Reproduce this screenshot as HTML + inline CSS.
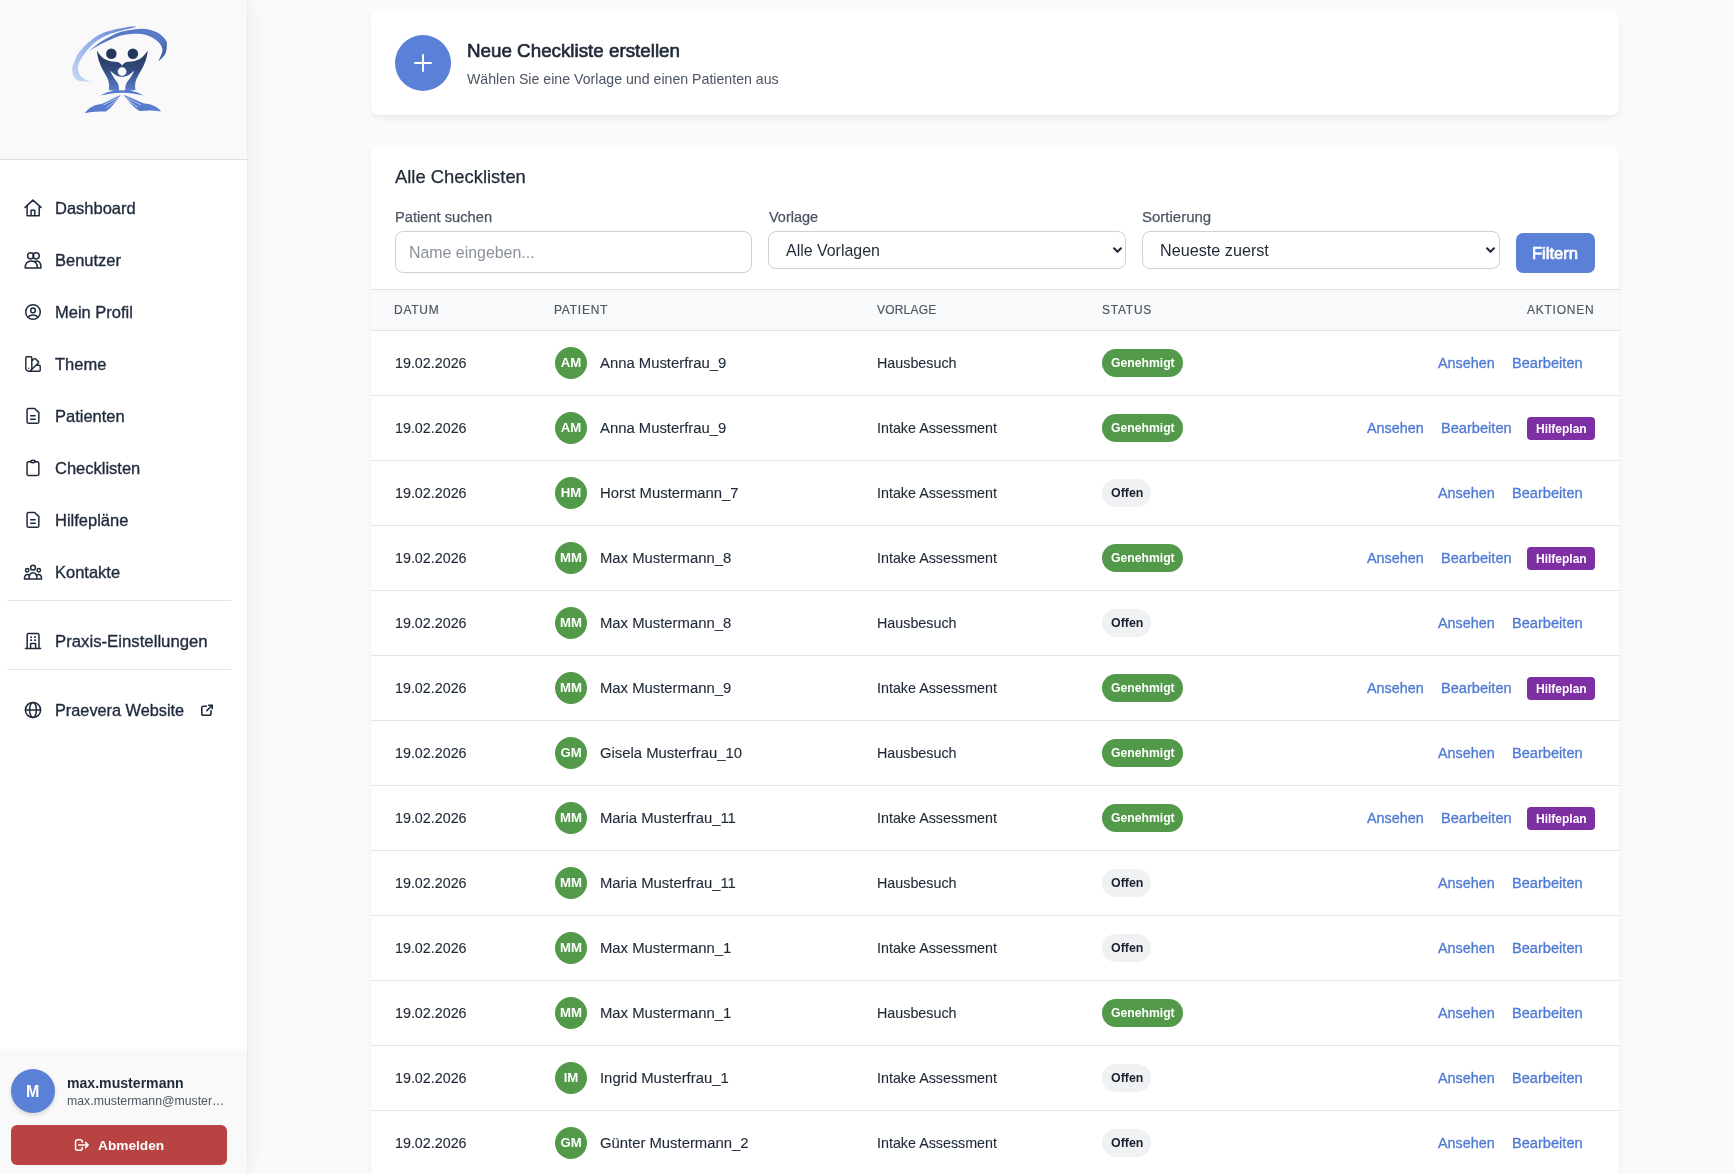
<!DOCTYPE html><html><head><meta charset="utf-8"><style>*{box-sizing:border-box;margin:0;padding:0}
html,body{width:1735px;height:1174px;overflow:hidden}
body{font-family:"Liberation Sans",sans-serif;background:#fafafa;color:#1f2937;position:relative}
.t{position:absolute;white-space:nowrap;will-change:transform}
.ic{position:absolute;width:20px;height:20px;overflow:visible}
.sb{position:absolute;left:0;top:0;width:247px;height:1174px;background:#fff;box-shadow:1px 0 2px rgba(0,0,0,0.04),4px 0 18px rgba(0,0,0,0.05)}
.sb-top{position:absolute;left:0;top:0;width:247px;height:160px;background:#f9f9fa;border-bottom:1px solid #dcdde4}
.sb-bot{position:absolute;left:0;top:1049px;width:247px;height:125px;background:#f9f9fa}
.sep{position:absolute;left:7px;width:224px;height:1px;background:#e2e3ea}
.uav{position:absolute;left:11px;top:1069px;width:44px;height:44px;border-radius:50%;background:#5b80d7;box-shadow:0 2px 4px rgba(0,0,0,0.15)}
.logout{position:absolute;left:11px;top:1125px;width:216px;height:40px;border-radius:6px;background:#b94242}
.card{position:absolute;left:371px;width:1248px;background:#fff;border-radius:8px;box-shadow:0 4px 7px -1px rgba(0,0,0,0.06),0 2px 4px -2px rgba(0,0,0,0.05),0 0 2px rgba(0,0,0,0.025)}
.plus{position:absolute;left:395px;top:35px;width:56px;height:56px;border-radius:50%;background:#5b80d7}
.plush{position:absolute;left:413.6px;top:62px;width:18.6px;height:2px;background:#fff;border-radius:1px}
.plusv{position:absolute;left:422px;top:53.9px;width:2px;height:18px;background:#fff;border-radius:1px}
.box{position:absolute;border:1px solid #cdd0d8;border-radius:8px;background:#fff}
.btn{position:absolute;left:1516px;top:233px;width:79px;height:40px;border-radius:7px;background:#5b80d7}
.thead{position:absolute;left:371px;top:289px;width:1248px;height:42px;background:#f9fafb;border-top:1px solid #e0e2e8;border-bottom:1px solid #e0e2e8}
.rowline{position:absolute;left:371px;width:1248px;height:1px;background:#e3e4ea}
.av{position:absolute;left:555px;width:32px;height:32px;border-radius:50%;background:#529a4a}
.avt{will-change:transform;position:absolute;left:555px;width:32px;height:32px;line-height:32px;text-align:center;color:#fff;font-weight:bold;font-size:13.2px}
.badge{position:absolute;left:1102px;height:28px;border-radius:14px}
.g{background:#529a4a}
.o{background:#f0f1f3}
.hp{position:absolute;left:1527px;width:68px;height:22.5px;border-radius:4px;background:#7e2fa3}
</style></head><body>
<div class="sb"><div class="sb-top"></div><div class="sb-bot"></div></div>
<svg style="position:absolute;left:60px;top:15px;width:120px;height:110px" viewBox="0 0 1281 1174">
<defs>
<linearGradient id="gs1" x1="0" y1="1" x2="1" y2="0"><stop offset="0" stop-color="#c9d9f4"/><stop offset="0.55" stop-color="#8eaae6"/><stop offset="1" stop-color="#5a7fd2"/></linearGradient>
<linearGradient id="gs2" x1="0" y1="0" x2="1" y2="1"><stop offset="0" stop-color="#4f74c8"/><stop offset="0.6" stop-color="#5a7cc8"/><stop offset="1" stop-color="#34508e"/></linearGradient>
<linearGradient id="gf" x1="0" y1="0" x2="0" y2="1"><stop offset="0" stop-color="#25365c"/><stop offset="0.45" stop-color="#33497a"/><stop offset="1" stop-color="#5b80d0"/></linearGradient>
</defs>
<path fill="url(#gs1)" d="M355,718 C355,718 280,713 250,708 C220,703 196,701 178,690 C160,679 149,662 141,642 C133,622 129,593 130,572 C131,551 132,548 146,517 C160,486 176,431 213,385 C250,339 316,278 367,242 C418,206 458,190 521,171 C584,152 698,132 747,125 C796,118 818,128 818,128 C818,128 796,131 747,144 C698,157 584,182 521,208 C458,234 412,260 367,297 C322,334 281,390 253,427 C225,464 210,493 200,517 C190,541 190,552 192,572 C194,592 199,620 212,640 C225,660 248,677 272,690 C296,703 355,718 355,718 Z"/>
<path fill="url(#gs2)" d="M303,390 C303,390 382,322 429,291 C476,260 539,225 583,205 C627,185 651,179 694,170 C737,161 797,152 839,149 C881,146 912,146 948,154 C984,162 1028,179 1058,198 C1088,217 1116,249 1130,270 C1144,291 1142,301 1141,325 C1140,349 1138,388 1123,416 C1108,444 1050,496 1050,496 C1050,496 1084,424 1090,398 C1096,372 1096,363 1087,343 C1078,323 1062,298 1039,278 C1016,258 981,236 948,223 C915,210 881,203 839,201 C797,199 737,203 694,210 C651,217 627,224 583,242 C539,260 476,291 429,316 C382,341 303,390 303,390 Z"/>
<circle cx="548" cy="413" r="56" fill="#24365c"/>
<circle cx="778" cy="413" r="56" fill="#24365c"/>
<path fill="url(#gf)" d="M395,380 C440,465 500,495 590,500 C650,505 680,540 663,600 C646,540 676,505 736,500 C826,495 886,465 936,380 C930,480 885,565 835,645 C805,695 795,745 805,800 C760,808 700,815 663,818 C626,815 566,808 521,800 C531,745 521,695 491,645 C441,565 400,480 395,380 Z"/>
<circle cx="663" cy="603" r="46" fill="#f9f9fa"/>
<path fill="#f9f9fa" d="M538,596 C580,640 620,662 650,660 L676,660 C706,662 746,640 790,596 C768,660 725,700 708,730 C696,760 694,790 699,822 L627,822 C632,790 630,760 618,730 C601,700 558,660 538,596 Z"/>
<path fill="#5479cc" d="M430,860 C520,810 600,800 663,805 C726,800 806,810 895,860 C806,840 726,828 663,830 C600,828 520,840 430,860 Z"/>
<path fill="#577ccf" d="M265,1050 C300,990 360,960 440,950 C500,930 580,880 650,850 C600,920 540,1000 490,1030 C420,1030 330,1030 265,1050 Z"/>
<path fill="#577ccf" d="M1080,1030 C1040,980 980,950 900,945 C840,920 760,880 680,850 C730,920 790,990 850,1025 C920,1020 1000,1015 1080,1030 Z"/>
<path fill="none" stroke="#e6ecf8" stroke-width="7" stroke-linecap="round" d="M455,930 L625,858 M470,958 L632,878 M500,985 L612,905 M875,930 L705,858 M860,958 L698,878 M830,985 L718,905"/>
</svg>
<div class="t" style="left:55px;top:200.03px;font-size:16.5px;line-height:16.5px;color:#1f2a3c;-webkit-text-stroke:0.35px #1f2a3c;">Dashboard</div>
<svg class="ic" style="left:23px;top:198px" viewBox="0 0 20 20" fill="none" stroke="#1f2a3c" stroke-width="1.5" stroke-linecap="round" stroke-linejoin="round"><path d="M2.1 9.4 L9.9 2.1 L18 9.4 M4.1 7.6 V17.8 H16.2 V7.6 M8.1 17.8 V12.2 H11.8 V17.8"/></svg>
<div class="t" style="left:55px;top:252.03px;font-size:16.5px;line-height:16.5px;color:#1f2a3c;-webkit-text-stroke:0.35px #1f2a3c;">Benutzer</div>
<svg class="ic" style="left:23px;top:250px" viewBox="0 0 20 20" fill="none" stroke="#1f2a3c" stroke-width="1.5" stroke-linecap="round" stroke-linejoin="round"><circle cx="7.7" cy="5.8" r="3.1"/><circle cx="13.1" cy="5.8" r="3.1"/><path d="M2.2 18 C2.2 13.5 4.5 11 8.3 11 C12 11 14.4 13.5 14.4 18 Z M11.5 11.6 C12.2 11.2 13 11 13.8 11 C16.5 11 18 13.8 18 18 H14.4"/></svg>
<div class="t" style="left:55px;top:304.03px;font-size:16.5px;line-height:16.5px;color:#1f2a3c;-webkit-text-stroke:0.35px #1f2a3c;">Mein Profil</div>
<svg class="ic" style="left:23px;top:302px" viewBox="0 0 20 20" fill="none" stroke="#1f2a3c" stroke-width="1.5" stroke-linecap="round" stroke-linejoin="round"><circle cx="10" cy="10" r="7.3"/><circle cx="10" cy="8.4" r="2.3"/><path d="M5.2 15.2 C6.5 13.6 8 13.1 10 13.1 C12 13.1 13.5 13.6 14.8 15.2"/></svg>
<div class="t" style="left:55px;top:356.03px;font-size:16.5px;line-height:16.5px;color:#1f2a3c;-webkit-text-stroke:0.35px #1f2a3c;">Theme</div>
<svg class="ic" style="left:23px;top:354px" viewBox="-0.5 -0.5 25 25" fill="none" stroke="#1f2a3c" stroke-width="1.8" stroke-linecap="round" stroke-linejoin="round"><path d="M4.098 19.902a3.75 3.75 0 0 0 5.304 0l6.401-6.402M6.75 21A3.75 3.75 0 0 1 3 17.25V4.125C3 3.504 3.504 3 4.125 3h5.25c.621 0 1.125.504 1.125 1.125v4.072M6.75 21a3.75 3.75 0 0 0 3.75-3.75V8.197M6.75 21h13.125c.621 0 1.125-.504 1.125-1.125v-5.25c0-.621-.504-1.125-1.125-1.125h-4.072M10.5 8.197l2.88-2.88c.438-.439 1.15-.439 1.59 0l3.712 3.713c.44.44.44 1.152 0 1.59l-2.879 2.88M6.75 17.25h.008v.008H6.75v-.008Z"/></svg>
<div class="t" style="left:55px;top:408.03px;font-size:16.5px;line-height:16.5px;color:#1f2a3c;-webkit-text-stroke:0.35px #1f2a3c;">Patienten</div>
<svg class="ic" style="left:23px;top:406px" viewBox="0 0 20 20" fill="none" stroke="#1f2a3c" stroke-width="1.5" stroke-linecap="round" stroke-linejoin="round"><path d="M5.65 2.45 H11.7 L15.85 6.6 V15.65 A1.6 1.6 0 0 1 14.25 17.25 H5.65 A1.6 1.6 0 0 1 4.05 15.65 V4.05 A1.6 1.6 0 0 1 5.65 2.45 Z M7.6 9.8 H12.2 M7.6 13.2 H12.2"/></svg>
<div class="t" style="left:55px;top:460.03px;font-size:16.5px;line-height:16.5px;color:#1f2a3c;-webkit-text-stroke:0.35px #1f2a3c;">Checklisten</div>
<svg class="ic" style="left:23px;top:458px" viewBox="0 0 20 20" fill="none" stroke="#1f2a3c" stroke-width="1.5" stroke-linecap="round" stroke-linejoin="round"><path d="M7.8 3.8 H5.65 A1.6 1.6 0 0 0 4.05 5.4 V15.95 A1.6 1.6 0 0 0 5.65 17.55 H14.25 A1.6 1.6 0 0 0 15.85 15.95 V5.4 A1.6 1.6 0 0 0 14.25 3.8 H12.2"/><ellipse cx="10" cy="3.5" rx="2.2" ry="1.2"/></svg>
<div class="t" style="left:55px;top:512.03px;font-size:16.5px;line-height:16.5px;color:#1f2a3c;-webkit-text-stroke:0.35px #1f2a3c;">Hilfepläne</div>
<svg class="ic" style="left:23px;top:510px" viewBox="0 0 20 20" fill="none" stroke="#1f2a3c" stroke-width="1.5" stroke-linecap="round" stroke-linejoin="round"><path d="M5.65 2.45 H11.7 L15.85 6.6 V15.65 A1.6 1.6 0 0 1 14.25 17.25 H5.65 A1.6 1.6 0 0 1 4.05 15.65 V4.05 A1.6 1.6 0 0 1 5.65 2.45 Z M7.6 9.8 H12.2 M7.6 13.2 H12.2"/></svg>
<div class="t" style="left:55px;top:564.03px;font-size:16.5px;line-height:16.5px;color:#1f2a3c;-webkit-text-stroke:0.35px #1f2a3c;">Kontakte</div>
<svg class="ic" style="left:23px;top:562px" viewBox="0 0 20 20" fill="none" stroke="#1f2a3c" stroke-width="1.5" stroke-linecap="round" stroke-linejoin="round"><circle cx="10" cy="5.7" r="2.4"/><circle cx="4.2" cy="8.2" r="1.7"/><circle cx="15.8" cy="8.2" r="1.7"/><path d="M1.4 17 C1.4 13.8 2.8 12.5 4.4 12.5 C5.2 12.5 5.7 12.8 6.2 13.2 M18.6 17 C18.6 13.8 17.2 12.5 15.6 12.5 C14.8 12.5 14.3 12.8 13.8 13.2 M1.4 17 H18.6 M6 17 C6 12.8 7.8 10.7 10 10.7 C12.2 10.7 14 12.8 14 17"/></svg>
<div class="sep" style="top:600px"></div>
<div class="t" style="left:55px;top:633.52px;font-size:16.75px;line-height:16.75px;color:#1f2a3c;-webkit-text-stroke:0.35px #1f2a3c;">Praxis-Einstellungen</div>
<svg class="ic" style="left:23px;top:631px" viewBox="0 0 20 20" fill="none" stroke="#1f2a3c" stroke-width="1.5" stroke-linecap="round" stroke-linejoin="round"><path d="M2.4 17.4 H17.6 M4.2 17.4 V3.9 A1.3 1.3 0 0 1 5.5 2.6 H14.7 A1.3 1.3 0 0 1 16 3.9 V17.4 M7.6 17.4 V12.6 H12.6 V17.4"/><path d="M8 6.1 h0.3 M11.9 6.1 h0.3 M8 9.2 h0.3 M11.9 9.2 h0.3" stroke-width="1.8"/></svg>
<div class="sep" style="top:669px"></div>
<div class="t" style="left:55px;top:702.20px;font-size:16.3px;line-height:16.3px;color:#1f2a3c;-webkit-text-stroke:0.35px #1f2a3c;">Praevera Website</div>
<svg class="ic" style="left:23px;top:700px" viewBox="0 0 20 20" fill="none" stroke="#1f2a3c" stroke-width="1.5" stroke-linecap="round" stroke-linejoin="round"><circle cx="10" cy="10" r="7.6"/><ellipse cx="10" cy="10" rx="3.4" ry="7.6"/><path d="M2.4 10 H17.6"/></svg>
<svg class="ic" style="left:198px;top:700px" viewBox="0 0 20 20" fill="none" stroke="#1f2a3c" stroke-width="1.6" stroke-linecap="round" stroke-linejoin="round"><path d="M8.3 6.3 H5.3 A1.5 1.5 0 0 0 3.8 7.8 V13.8 A1.5 1.5 0 0 0 5.3 15.3 H11.5 A1.5 1.5 0 0 0 13 13.8 V10.8 M8.8 10.6 L14.2 5.2 M10.6 5.2 H14.2 V8.8"/></svg>
<div class="uav"></div>
<div class="t" style="left:25.6px;top:1083.56px;font-size:16px;line-height:16px;color:#fff;font-weight:bold">M</div>
<div class="t" style="left:67px;top:1075.76px;font-size:14.1px;line-height:14.1px;color:#1f2937;font-weight:bold">max.mustermann</div>
<div class="t" style="left:67px;top:1094.79px;font-size:12.3px;line-height:12.3px;color:#4b5563">max.mustermann@muster…</div>
<div class="logout"></div>
<svg class="ic" style="left:72px;top:1135px" viewBox="0 0 20 20" fill="none" stroke="#fff" stroke-width="1.5" stroke-linecap="round" stroke-linejoin="round"><path d="M10.3 7.3 V6.6 A1.95 1.95 0 0 0 8.35 4.65 H5.5 A1.95 1.95 0 0 0 3.55 6.6 V13.2 A1.95 1.95 0 0 0 5.5 15.15 H8.35 A1.95 1.95 0 0 0 10.3 13.2 V12.5 M6.6 10 H16.2 M13.5 7.4 L16.2 10 L13.5 12.6"/></svg>
<div class="t" style="left:98px;top:1139.00px;font-size:13.7px;line-height:13.7px;color:#fff;font-weight:bold">Abmelden</div>
<div class="card" style="top:11px;height:104px"></div>
<div class="plus"></div><div class="plush"></div><div class="plusv"></div>
<div class="t" style="left:467px;top:41.59px;font-size:18.8px;line-height:18.8px;color:#1f2937;-webkit-text-stroke:0.65px #1f2937">Neue Checkliste erstellen</div>
<div class="t" style="left:467px;top:72.11px;font-size:14.17px;line-height:14.17px;color:#4b5563">Wählen Sie eine Vorlage und einen Patienten aus</div>
<div class="card" style="top:147px;height:1100px"></div>
<div class="t" style="left:395px;top:168.42px;font-size:18.4px;line-height:18.4px;color:#1f2937;-webkit-text-stroke:0.25px currentColor;">Alle Checklisten</div>
<div class="t" style="left:395px;top:209.57px;font-size:14.68px;line-height:14.68px;color:#4b5563;-webkit-text-stroke:0.25px currentColor;">Patient suchen</div>
<div class="t" style="left:769px;top:210.12px;font-size:14.51px;line-height:14.51px;color:#4b5563;-webkit-text-stroke:0.25px currentColor;">Vorlage</div>
<div class="t" style="left:1142.4px;top:209.00px;font-size:15.0px;line-height:15.0px;color:#4b5563;-webkit-text-stroke:0.25px currentColor;">Sortierung</div>
<div class="box" style="left:395px;top:231px;width:357px;height:42px"></div>
<div class="t" style="left:408.6px;top:244.52px;font-size:15.92px;line-height:15.92px;color:#8b909c">Name eingeben...</div>
<div class="box" style="left:768px;top:231px;width:358px;height:38px"></div>
<div class="t" style="left:786px;top:243.10px;font-size:15.95px;line-height:15.95px;color:#1f2937">Alle Vorlagen</div>
<svg style="position:absolute;left:1112.5px;top:247px;width:9px;height:7px;overflow:visible" viewBox="0 0 9 7" fill="none" stroke="#1f2937" stroke-width="2" stroke-linecap="round" stroke-linejoin="round"><path d="M1 1.2 L4.5 4.8 L8 1.2"/></svg>
<div class="box" style="left:1142px;top:231px;width:358px;height:38px"></div>
<div class="t" style="left:1159.7px;top:242.18px;font-size:16.21px;line-height:16.21px;color:#1f2937">Neueste zuerst</div>
<svg style="position:absolute;left:1486.3px;top:247px;width:9px;height:7px;overflow:visible" viewBox="0 0 9 7" fill="none" stroke="#1f2937" stroke-width="2" stroke-linecap="round" stroke-linejoin="round"><path d="M1 1.2 L4.5 4.8 L8 1.2"/></svg>
<div class="btn"></div>
<div class="t" style="left:1532.3px;top:245.89px;font-size:16.55px;line-height:16.55px;color:#fff;-webkit-text-stroke:0.7px #fff">Filtern</div>
<div class="thead"></div>
<div class="t" style="left:394px;top:303.94px;font-size:12.0px;line-height:12.0px;color:#505866;letter-spacing:0.75px;-webkit-text-stroke:0.2px #505866;">DATUM</div>
<div class="t" style="left:554.3px;top:303.94px;font-size:12.0px;line-height:12.0px;color:#505866;letter-spacing:0.75px;-webkit-text-stroke:0.2px #505866;">PATIENT</div>
<div class="t" style="left:876.8px;top:303.94px;font-size:12.0px;line-height:12.0px;color:#505866;letter-spacing:0.75px;-webkit-text-stroke:0.2px #505866;letter-spacing:0.2px;">VORLAGE</div>
<div class="t" style="left:1101.6px;top:303.94px;font-size:12.0px;line-height:12.0px;color:#505866;letter-spacing:0.75px;-webkit-text-stroke:0.2px #505866;">STATUS</div>
<div class="t" style="right:140.70000000000005px;top:303.94px;font-size:12.0px;line-height:12.0px;color:#505866;letter-spacing:0.75px;-webkit-text-stroke:0.2px #505866;">AKTIONEN</div>
<div class="rowline" style="top:395px"></div>
<div class="t" style="left:395px;top:355.89px;font-size:14.31px;line-height:14.31px;color:#1f2937;-webkit-text-stroke:0.12px currentColor;">19.02.2026</div>
<div class="av" style="top:347px"></div>
<div class="avt" style="top:347px">AM</div>
<div class="t" style="left:600px;top:356.23px;font-size:14.85px;line-height:14.85px;color:#1f2937;-webkit-text-stroke:0.12px currentColor;">Anna Musterfrau_9</div>
<div class="t" style="left:877.2px;top:355.90px;font-size:14.3px;line-height:14.3px;color:#1f2937;-webkit-text-stroke:0.12px currentColor;">Hausbesuch</div>
<div class="badge g" style="top:349px;width:81px"></div>
<div class="t" style="left:1110.8px;top:356.67px;font-size:12.2px;line-height:12.2px;color:#fff;font-weight:bold">Genehmigt</div>
<div class="t" style="left:1437.9px;top:355.82px;font-size:14.39px;line-height:14.39px;color:#4e7ad3;-webkit-text-stroke:0.3px #4e7ad3;">Ansehen</div>
<div class="t" style="left:1511.5px;top:355.62px;font-size:14.62px;line-height:14.62px;color:#4e7ad3;-webkit-text-stroke:0.3px #4e7ad3;">Bearbeiten</div>
<div class="rowline" style="top:460px"></div>
<div class="t" style="left:395px;top:420.89px;font-size:14.31px;line-height:14.31px;color:#1f2937;-webkit-text-stroke:0.12px currentColor;">19.02.2026</div>
<div class="av" style="top:412px"></div>
<div class="avt" style="top:412px">AM</div>
<div class="t" style="left:600px;top:421.23px;font-size:14.85px;line-height:14.85px;color:#1f2937;-webkit-text-stroke:0.12px currentColor;">Anna Musterfrau_9</div>
<div class="t" style="left:877.2px;top:420.90px;font-size:14.3px;line-height:14.3px;color:#1f2937;-webkit-text-stroke:0.12px currentColor;">Intake Assessment</div>
<div class="badge g" style="top:414px;width:81px"></div>
<div class="t" style="left:1110.8px;top:421.67px;font-size:12.2px;line-height:12.2px;color:#fff;font-weight:bold">Genehmigt</div>
<div class="t" style="left:1367.1px;top:420.82px;font-size:14.39px;line-height:14.39px;color:#4e7ad3;-webkit-text-stroke:0.3px #4e7ad3;">Ansehen</div>
<div class="t" style="left:1440.6px;top:420.62px;font-size:14.62px;line-height:14.62px;color:#4e7ad3;-webkit-text-stroke:0.3px #4e7ad3;">Bearbeiten</div>
<div class="hp" style="top:417.3px"></div>
<div class="t" style="left:1535.5px;top:422.94px;font-size:12.0px;line-height:12.0px;color:#fff;font-weight:bold">Hilfeplan</div>
<div class="rowline" style="top:525px"></div>
<div class="t" style="left:395px;top:485.89px;font-size:14.31px;line-height:14.31px;color:#1f2937;-webkit-text-stroke:0.12px currentColor;">19.02.2026</div>
<div class="av" style="top:477px"></div>
<div class="avt" style="top:477px">HM</div>
<div class="t" style="left:600px;top:486.23px;font-size:14.85px;line-height:14.85px;color:#1f2937;-webkit-text-stroke:0.12px currentColor;">Horst Mustermann_7</div>
<div class="t" style="left:877.2px;top:485.90px;font-size:14.3px;line-height:14.3px;color:#1f2937;-webkit-text-stroke:0.12px currentColor;">Intake Assessment</div>
<div class="badge o" style="top:479px;width:49px"></div>
<div class="t" style="left:1110.6px;top:486.50px;font-size:12.4px;line-height:12.4px;color:#1a2030;font-weight:bold">Offen</div>
<div class="t" style="left:1437.9px;top:485.82px;font-size:14.39px;line-height:14.39px;color:#4e7ad3;-webkit-text-stroke:0.3px #4e7ad3;">Ansehen</div>
<div class="t" style="left:1511.5px;top:485.62px;font-size:14.62px;line-height:14.62px;color:#4e7ad3;-webkit-text-stroke:0.3px #4e7ad3;">Bearbeiten</div>
<div class="rowline" style="top:590px"></div>
<div class="t" style="left:395px;top:550.89px;font-size:14.31px;line-height:14.31px;color:#1f2937;-webkit-text-stroke:0.12px currentColor;">19.02.2026</div>
<div class="av" style="top:542px"></div>
<div class="avt" style="top:542px">MM</div>
<div class="t" style="left:600px;top:551.23px;font-size:14.85px;line-height:14.85px;color:#1f2937;-webkit-text-stroke:0.12px currentColor;">Max Mustermann_8</div>
<div class="t" style="left:877.2px;top:550.90px;font-size:14.3px;line-height:14.3px;color:#1f2937;-webkit-text-stroke:0.12px currentColor;">Intake Assessment</div>
<div class="badge g" style="top:544px;width:81px"></div>
<div class="t" style="left:1110.8px;top:551.67px;font-size:12.2px;line-height:12.2px;color:#fff;font-weight:bold">Genehmigt</div>
<div class="t" style="left:1367.1px;top:550.82px;font-size:14.39px;line-height:14.39px;color:#4e7ad3;-webkit-text-stroke:0.3px #4e7ad3;">Ansehen</div>
<div class="t" style="left:1440.6px;top:550.62px;font-size:14.62px;line-height:14.62px;color:#4e7ad3;-webkit-text-stroke:0.3px #4e7ad3;">Bearbeiten</div>
<div class="hp" style="top:547.3px"></div>
<div class="t" style="left:1535.5px;top:552.94px;font-size:12.0px;line-height:12.0px;color:#fff;font-weight:bold">Hilfeplan</div>
<div class="rowline" style="top:655px"></div>
<div class="t" style="left:395px;top:615.89px;font-size:14.31px;line-height:14.31px;color:#1f2937;-webkit-text-stroke:0.12px currentColor;">19.02.2026</div>
<div class="av" style="top:607px"></div>
<div class="avt" style="top:607px">MM</div>
<div class="t" style="left:600px;top:616.23px;font-size:14.85px;line-height:14.85px;color:#1f2937;-webkit-text-stroke:0.12px currentColor;">Max Mustermann_8</div>
<div class="t" style="left:877.2px;top:615.90px;font-size:14.3px;line-height:14.3px;color:#1f2937;-webkit-text-stroke:0.12px currentColor;">Hausbesuch</div>
<div class="badge o" style="top:609px;width:49px"></div>
<div class="t" style="left:1110.6px;top:616.50px;font-size:12.4px;line-height:12.4px;color:#1a2030;font-weight:bold">Offen</div>
<div class="t" style="left:1437.9px;top:615.82px;font-size:14.39px;line-height:14.39px;color:#4e7ad3;-webkit-text-stroke:0.3px #4e7ad3;">Ansehen</div>
<div class="t" style="left:1511.5px;top:615.62px;font-size:14.62px;line-height:14.62px;color:#4e7ad3;-webkit-text-stroke:0.3px #4e7ad3;">Bearbeiten</div>
<div class="rowline" style="top:720px"></div>
<div class="t" style="left:395px;top:680.89px;font-size:14.31px;line-height:14.31px;color:#1f2937;-webkit-text-stroke:0.12px currentColor;">19.02.2026</div>
<div class="av" style="top:672px"></div>
<div class="avt" style="top:672px">MM</div>
<div class="t" style="left:600px;top:681.23px;font-size:14.85px;line-height:14.85px;color:#1f2937;-webkit-text-stroke:0.12px currentColor;">Max Mustermann_9</div>
<div class="t" style="left:877.2px;top:680.90px;font-size:14.3px;line-height:14.3px;color:#1f2937;-webkit-text-stroke:0.12px currentColor;">Intake Assessment</div>
<div class="badge g" style="top:674px;width:81px"></div>
<div class="t" style="left:1110.8px;top:681.67px;font-size:12.2px;line-height:12.2px;color:#fff;font-weight:bold">Genehmigt</div>
<div class="t" style="left:1367.1px;top:680.82px;font-size:14.39px;line-height:14.39px;color:#4e7ad3;-webkit-text-stroke:0.3px #4e7ad3;">Ansehen</div>
<div class="t" style="left:1440.6px;top:680.62px;font-size:14.62px;line-height:14.62px;color:#4e7ad3;-webkit-text-stroke:0.3px #4e7ad3;">Bearbeiten</div>
<div class="hp" style="top:677.3px"></div>
<div class="t" style="left:1535.5px;top:682.94px;font-size:12.0px;line-height:12.0px;color:#fff;font-weight:bold">Hilfeplan</div>
<div class="rowline" style="top:785px"></div>
<div class="t" style="left:395px;top:745.89px;font-size:14.31px;line-height:14.31px;color:#1f2937;-webkit-text-stroke:0.12px currentColor;">19.02.2026</div>
<div class="av" style="top:737px"></div>
<div class="avt" style="top:737px">GM</div>
<div class="t" style="left:600px;top:746.23px;font-size:14.85px;line-height:14.85px;color:#1f2937;-webkit-text-stroke:0.12px currentColor;">Gisela Musterfrau_10</div>
<div class="t" style="left:877.2px;top:745.90px;font-size:14.3px;line-height:14.3px;color:#1f2937;-webkit-text-stroke:0.12px currentColor;">Hausbesuch</div>
<div class="badge g" style="top:739px;width:81px"></div>
<div class="t" style="left:1110.8px;top:746.67px;font-size:12.2px;line-height:12.2px;color:#fff;font-weight:bold">Genehmigt</div>
<div class="t" style="left:1437.9px;top:745.82px;font-size:14.39px;line-height:14.39px;color:#4e7ad3;-webkit-text-stroke:0.3px #4e7ad3;">Ansehen</div>
<div class="t" style="left:1511.5px;top:745.62px;font-size:14.62px;line-height:14.62px;color:#4e7ad3;-webkit-text-stroke:0.3px #4e7ad3;">Bearbeiten</div>
<div class="rowline" style="top:850px"></div>
<div class="t" style="left:395px;top:810.89px;font-size:14.31px;line-height:14.31px;color:#1f2937;-webkit-text-stroke:0.12px currentColor;">19.02.2026</div>
<div class="av" style="top:802px"></div>
<div class="avt" style="top:802px">MM</div>
<div class="t" style="left:600px;top:811.23px;font-size:14.85px;line-height:14.85px;color:#1f2937;-webkit-text-stroke:0.12px currentColor;">Maria Musterfrau_11</div>
<div class="t" style="left:877.2px;top:810.90px;font-size:14.3px;line-height:14.3px;color:#1f2937;-webkit-text-stroke:0.12px currentColor;">Intake Assessment</div>
<div class="badge g" style="top:804px;width:81px"></div>
<div class="t" style="left:1110.8px;top:811.67px;font-size:12.2px;line-height:12.2px;color:#fff;font-weight:bold">Genehmigt</div>
<div class="t" style="left:1367.1px;top:810.82px;font-size:14.39px;line-height:14.39px;color:#4e7ad3;-webkit-text-stroke:0.3px #4e7ad3;">Ansehen</div>
<div class="t" style="left:1440.6px;top:810.62px;font-size:14.62px;line-height:14.62px;color:#4e7ad3;-webkit-text-stroke:0.3px #4e7ad3;">Bearbeiten</div>
<div class="hp" style="top:807.3px"></div>
<div class="t" style="left:1535.5px;top:812.94px;font-size:12.0px;line-height:12.0px;color:#fff;font-weight:bold">Hilfeplan</div>
<div class="rowline" style="top:915px"></div>
<div class="t" style="left:395px;top:875.89px;font-size:14.31px;line-height:14.31px;color:#1f2937;-webkit-text-stroke:0.12px currentColor;">19.02.2026</div>
<div class="av" style="top:867px"></div>
<div class="avt" style="top:867px">MM</div>
<div class="t" style="left:600px;top:876.23px;font-size:14.85px;line-height:14.85px;color:#1f2937;-webkit-text-stroke:0.12px currentColor;">Maria Musterfrau_11</div>
<div class="t" style="left:877.2px;top:875.90px;font-size:14.3px;line-height:14.3px;color:#1f2937;-webkit-text-stroke:0.12px currentColor;">Hausbesuch</div>
<div class="badge o" style="top:869px;width:49px"></div>
<div class="t" style="left:1110.6px;top:876.50px;font-size:12.4px;line-height:12.4px;color:#1a2030;font-weight:bold">Offen</div>
<div class="t" style="left:1437.9px;top:875.82px;font-size:14.39px;line-height:14.39px;color:#4e7ad3;-webkit-text-stroke:0.3px #4e7ad3;">Ansehen</div>
<div class="t" style="left:1511.5px;top:875.62px;font-size:14.62px;line-height:14.62px;color:#4e7ad3;-webkit-text-stroke:0.3px #4e7ad3;">Bearbeiten</div>
<div class="rowline" style="top:980px"></div>
<div class="t" style="left:395px;top:940.89px;font-size:14.31px;line-height:14.31px;color:#1f2937;-webkit-text-stroke:0.12px currentColor;">19.02.2026</div>
<div class="av" style="top:932px"></div>
<div class="avt" style="top:932px">MM</div>
<div class="t" style="left:600px;top:941.23px;font-size:14.85px;line-height:14.85px;color:#1f2937;-webkit-text-stroke:0.12px currentColor;">Max Mustermann_1</div>
<div class="t" style="left:877.2px;top:940.90px;font-size:14.3px;line-height:14.3px;color:#1f2937;-webkit-text-stroke:0.12px currentColor;">Intake Assessment</div>
<div class="badge o" style="top:934px;width:49px"></div>
<div class="t" style="left:1110.6px;top:941.50px;font-size:12.4px;line-height:12.4px;color:#1a2030;font-weight:bold">Offen</div>
<div class="t" style="left:1437.9px;top:940.82px;font-size:14.39px;line-height:14.39px;color:#4e7ad3;-webkit-text-stroke:0.3px #4e7ad3;">Ansehen</div>
<div class="t" style="left:1511.5px;top:940.62px;font-size:14.62px;line-height:14.62px;color:#4e7ad3;-webkit-text-stroke:0.3px #4e7ad3;">Bearbeiten</div>
<div class="rowline" style="top:1045px"></div>
<div class="t" style="left:395px;top:1005.89px;font-size:14.31px;line-height:14.31px;color:#1f2937;-webkit-text-stroke:0.12px currentColor;">19.02.2026</div>
<div class="av" style="top:997px"></div>
<div class="avt" style="top:997px">MM</div>
<div class="t" style="left:600px;top:1006.23px;font-size:14.85px;line-height:14.85px;color:#1f2937;-webkit-text-stroke:0.12px currentColor;">Max Mustermann_1</div>
<div class="t" style="left:877.2px;top:1005.90px;font-size:14.3px;line-height:14.3px;color:#1f2937;-webkit-text-stroke:0.12px currentColor;">Hausbesuch</div>
<div class="badge g" style="top:999px;width:81px"></div>
<div class="t" style="left:1110.8px;top:1006.67px;font-size:12.2px;line-height:12.2px;color:#fff;font-weight:bold">Genehmigt</div>
<div class="t" style="left:1437.9px;top:1005.82px;font-size:14.39px;line-height:14.39px;color:#4e7ad3;-webkit-text-stroke:0.3px #4e7ad3;">Ansehen</div>
<div class="t" style="left:1511.5px;top:1005.62px;font-size:14.62px;line-height:14.62px;color:#4e7ad3;-webkit-text-stroke:0.3px #4e7ad3;">Bearbeiten</div>
<div class="rowline" style="top:1110px"></div>
<div class="t" style="left:395px;top:1070.89px;font-size:14.31px;line-height:14.31px;color:#1f2937;-webkit-text-stroke:0.12px currentColor;">19.02.2026</div>
<div class="av" style="top:1062px"></div>
<div class="avt" style="top:1062px">IM</div>
<div class="t" style="left:600px;top:1071.23px;font-size:14.85px;line-height:14.85px;color:#1f2937;-webkit-text-stroke:0.12px currentColor;">Ingrid Musterfrau_1</div>
<div class="t" style="left:877.2px;top:1070.90px;font-size:14.3px;line-height:14.3px;color:#1f2937;-webkit-text-stroke:0.12px currentColor;">Intake Assessment</div>
<div class="badge o" style="top:1064px;width:49px"></div>
<div class="t" style="left:1110.6px;top:1071.50px;font-size:12.4px;line-height:12.4px;color:#1a2030;font-weight:bold">Offen</div>
<div class="t" style="left:1437.9px;top:1070.82px;font-size:14.39px;line-height:14.39px;color:#4e7ad3;-webkit-text-stroke:0.3px #4e7ad3;">Ansehen</div>
<div class="t" style="left:1511.5px;top:1070.62px;font-size:14.62px;line-height:14.62px;color:#4e7ad3;-webkit-text-stroke:0.3px #4e7ad3;">Bearbeiten</div>
<div class="rowline" style="top:1175px"></div>
<div class="t" style="left:395px;top:1135.89px;font-size:14.31px;line-height:14.31px;color:#1f2937;-webkit-text-stroke:0.12px currentColor;">19.02.2026</div>
<div class="av" style="top:1127px"></div>
<div class="avt" style="top:1127px">GM</div>
<div class="t" style="left:600px;top:1136.23px;font-size:14.85px;line-height:14.85px;color:#1f2937;-webkit-text-stroke:0.12px currentColor;">Günter Mustermann_2</div>
<div class="t" style="left:877.2px;top:1135.90px;font-size:14.3px;line-height:14.3px;color:#1f2937;-webkit-text-stroke:0.12px currentColor;">Intake Assessment</div>
<div class="badge o" style="top:1129px;width:49px"></div>
<div class="t" style="left:1110.6px;top:1136.50px;font-size:12.4px;line-height:12.4px;color:#1a2030;font-weight:bold">Offen</div>
<div class="t" style="left:1437.9px;top:1135.82px;font-size:14.39px;line-height:14.39px;color:#4e7ad3;-webkit-text-stroke:0.3px #4e7ad3;">Ansehen</div>
<div class="t" style="left:1511.5px;top:1135.62px;font-size:14.62px;line-height:14.62px;color:#4e7ad3;-webkit-text-stroke:0.3px #4e7ad3;">Bearbeiten</div>
</body></html>
